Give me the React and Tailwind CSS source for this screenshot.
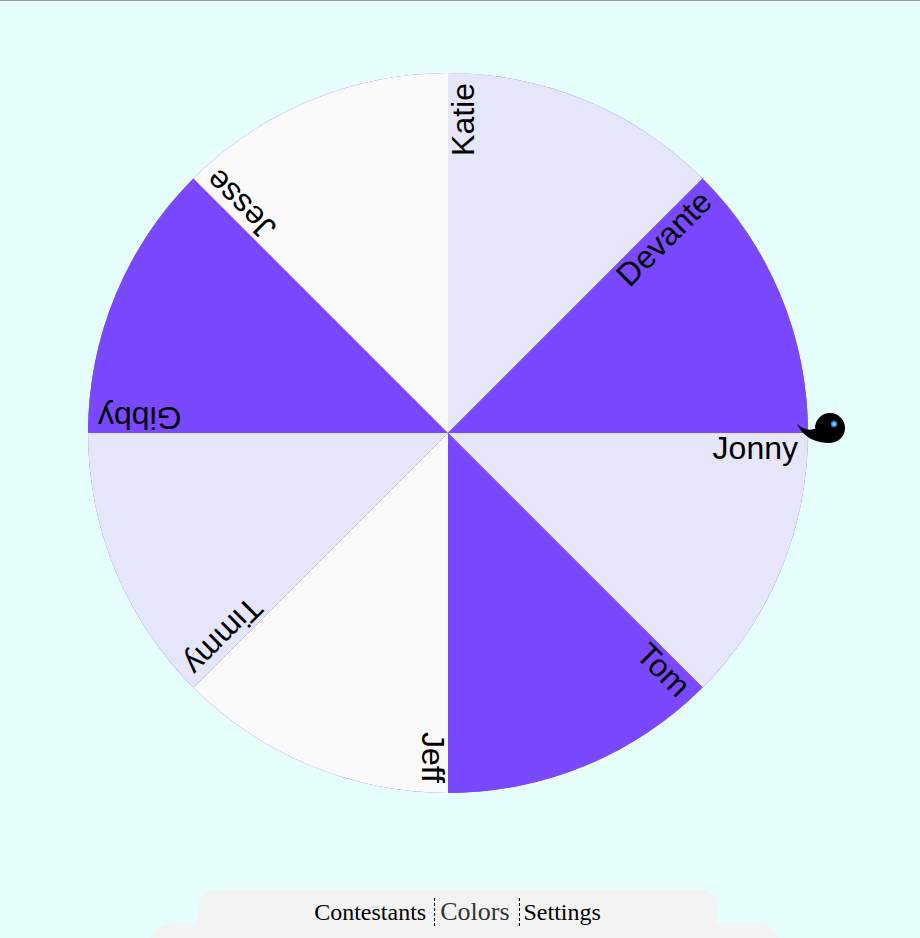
import React from 'react';

const CX = 360;
const CY = 360;
const R = 360;

const slices = [
  { name: 'Jonny', fill: '#e6e6fa' },
  { name: 'Tom', fill: '#7a49ff' },
  { name: 'Jeff', fill: '#fafafa' },
  { name: 'Timmy', fill: '#e6e6fa' },
  { name: 'Gibby', fill: '#7a49ff' },
  { name: 'Jesse', fill: '#fafafa' },
  { name: 'Katie', fill: '#e6e6fa' },
  { name: 'Devante', fill: '#7a49ff' },
];

function slicePath(i) {
  const a0 = (i * 45 * Math.PI) / 180;
  const a1 = ((i + 1) * 45 * Math.PI) / 180;
  const x0 = CX + R * Math.cos(a0);
  const y0 = CY + R * Math.sin(a0);
  const x1 = CX + R * Math.cos(a1);
  const y1 = CY + R * Math.sin(a1);
  return `M${CX} ${CY}L${x0} ${y0}A${R} ${R} 0 0 1 ${x1} ${y1}Z`;
}

function Wheel() {
  return (
    <svg width="760" height="720" viewBox="0 0 760 720" className="block font-['Liberation_Sans',Arial,sans-serif]">
      <circle cx={CX} cy={CY} r={R} fill="#7a49ff" />
      {slices.map((s, i) => (
        <path key={s.name} d={slicePath(i)} fill={s.fill} />
      ))}
      {slices.map((s, i) => (
        <text
          key={s.name}
          x={CX + 350}
          y={CY + 26}
          textAnchor="end"
          fontSize="32"
          fill="#000"
          transform={`rotate(${i * 45} ${CX} ${CY})`}
        >
          {s.name}
        </text>
      ))}
      {/* pointer */}
      <defs>
        <radialGradient id="eye">
          <stop offset="0%" stopColor="#bfe6ff" />
          <stop offset="60%" stopColor="#2f9fe8" />
          <stop offset="100%" stopColor="#0c3f66" />
        </radialGradient>
      </defs>
      <path
        d="M709 351C716 357 722 358 729 355C733 353 733 348 735 344L742 370C730 370 716 366 709 351Z"
        fill="#000"
      />
      <circle cx="742" cy="355" r="15" fill="#000" />
      <circle cx="746" cy="351" r="3.5" fill="url(#eye)" />
    </svg>
  );
}

function App() {
  return (
    <div className="h-[938px] overflow-hidden border-t border-[#999999] bg-[#e6fffd] font-['Liberation_Serif','Times_New_Roman',serif] text-black">
      <div className="pl-[88px] pt-[72px]">
        <Wheel />
      </div>
      <div className="ml-[198px] mt-[97px] h-[33px] w-[519px] rounded-t-[16px] bg-[#f3f3f3] pt-[8px]">
        <div className="flex items-baseline justify-center pr-[4px] text-[24px] leading-[28px]">
          <span className="px-[8px]">Contestants</span>
          <span className="border-x border-dashed border-black pl-[5px] pr-[9px] text-[26px] text-[#333333]">Colors</span>
          <span className="px-[4px]">Settings</span>
        </div>
      </div>
      <div className="ml-[148px] h-[60px] w-[634px] rounded-t-[26px] bg-[#f3f3f3]" />
    </div>
  );
}

export default App;
